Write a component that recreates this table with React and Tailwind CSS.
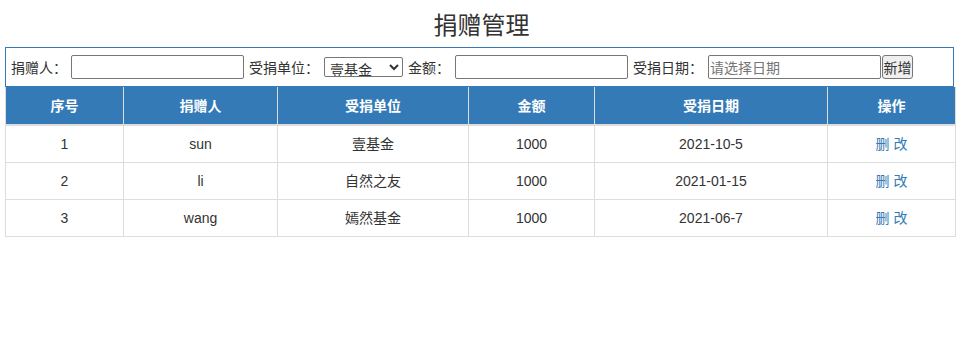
import React from 'react';

const rows = [
  { id: 1, name: 'sun', org: '壹基金', amount: 1000, date: '2021-10-5' },
  { id: 2, name: 'li', org: '自然之友', amount: 1000, date: '2021-01-15' },
  { id: 3, name: 'wang', org: '嫣然基金', amount: 1000, date: '2021-06-7' },
];

const cols = [
  { label: '序号', w: 'w-[118px]' },
  { label: '捐赠人', w: 'w-[154px]' },
  { label: '受捐单位', w: 'w-[191px]' },
  { label: '金额', w: 'w-[126px]' },
  { label: '受捐日期', w: 'w-[233px]' },
  { label: '操作', w: 'w-[128px]' },
];

const font = 'font-["Liberation_Sans","Noto_Sans_CJK_SC",sans-serif]';

export default function App() {
  return (
    <div className={`${font} text-[14px] text-[#333] bg-white w-[963px] h-[338px]`}>
      <div className="h-[47px] flex items-center justify-center text-[24px] font-['Noto_Sans_CJK_SC',sans-serif]">捐赠管理</div>

      <div className="ml-[5px] w-[949px] h-[40px] border border-[#337ab7] flex items-center pl-[5px] font-['Noto_Sans_CJK_SC',sans-serif]">
        <span className="w-[56px]">捐赠人：</span>
        <input className="ml-[4px] w-[173px] h-[24px] border border-[#767676] rounded-[2px] bg-white" />
        <span className="ml-[5px] w-[70px]">受捐单位：</span>
        <select className="ml-[5px] w-[79px] h-[20px] border border-[#767676] rounded-[2px] bg-white text-[14px] leading-[18px] pl-[1px] text-[#333]" defaultValue="壹基金">
          <option>壹基金</option>
          <option>自然之友</option>
          <option>嫣然基金</option>
        </select>
        <span className="ml-[5px] w-[42px]">金额：</span>
        <input className="ml-[5px] w-[173px] h-[24px] border border-[#767676] rounded-[2px] bg-white" />
        <span className="ml-[5px] w-[70px]">受捐日期：</span>
        <input
          placeholder="请选择日期"
          className="ml-[5px] w-[173px] h-[24px] border border-[#767676] rounded-[2px] bg-white px-[1px] text-[14px] placeholder:text-[#757575]"
        />
        <button className="ml-[1px] w-[31px] h-[24px] border border-[#767676] rounded-[3px] bg-[#efefef] text-[#333] text-[14px] leading-none px-0">新增</button>
      </div>

      <table className="ml-[5px] w-[950px] table-fixed border-collapse">
        <thead>
          <tr className="bg-[#337ab7] text-white h-[38px]">
            {cols.map(c => (
              <th key={c.label} className={`${c.w} border border-[#ddd] border-t-0 border-b-2 font-bold font-['Noto_Sans_CJK_SC',sans-serif] text-[14px]`}>{c.label}</th>
            ))}
          </tr>
        </thead>
        <tbody>
          {rows.map(r => (
            <tr key={r.id} className="h-[37px] text-center">
              <td className="border border-[#ddd] pt-[2px]">{r.id}</td>
              <td className="border border-[#ddd] pt-[2px]">{r.name}</td>
              <td className="border border-[#ddd] pt-[2px]">{r.org}</td>
              <td className="border border-[#ddd] pt-[2px]">{r.amount}</td>
              <td className="border border-[#ddd] pt-[2px]">{r.date}</td>
              <td className="border border-[#ddd] pt-[2px] text-[#337ab7]">
                <a>删</a> <a>改</a>
              </td>
            </tr>
          ))}
        </tbody>
      </table>
    </div>
  );
}
